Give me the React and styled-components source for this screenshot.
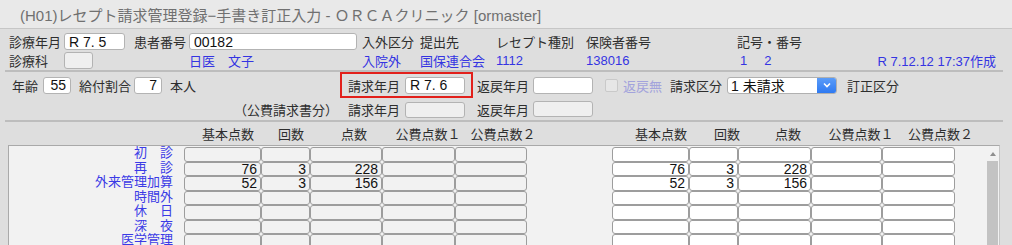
import React from "react";
import styled, { createGlobalStyle } from "styled-components";

const GlobalStyle = createGlobalStyle`
  body {
    margin: 0;
    background: #dedede;
    font-family: "Liberation Sans", "Noto Sans CJK JP", sans-serif;
    overflow: hidden;
  }
`;

const Window = styled.div`
  width: 1012px;
  height: 245px;
  overflow: hidden;
  background: #dedede;
`;

const TitleBar = styled.div`
  height: 28px;
  display: flex;
  align-items: center;
  padding-left: 20px;
  background: #e9e9e9;
  border-bottom: 1px solid #c6c6c6;
  font-size: 15px;
  color: #707070;
  white-space: nowrap;
`;

const Form = styled.div`
  margin: 0 9px 0 5px;
`;

const InfoGrid = styled.div`
  display: grid;
  grid-template-columns: 55px 70px 55px 173px 58px 76px 90px 151px 1fr;
  grid-template-rows: 19px 19px;
  align-items: center;
  padding: 3px 0 0 4px;
`;

const Label = styled.span`
  font-size: 13px;
  color: ${(p) => (p.$muted ? "#a3a3dc" : "#2e2e2e")};
  white-space: nowrap;
  text-align: ${(p) => p.$align || "left"};
`;

const Value = styled.span`
  font-size: 13px;
  color: #3434e2;
  white-space: nowrap;
`;

const Field = styled.input`
  box-sizing: border-box;
  width: ${(p) => p.$w}px;
  height: ${(p) => p.$h || 17}px;
  margin: 0;
  padding: 0 4px;
  border: 1px solid #b3b3b3;
  border-radius: 3px;
  background: ${(p) => (p.disabled ? "#efefef" : "#fff")};
  font-family: "Liberation Sans", "Noto Sans CJK JP", sans-serif;
  font-size: 14px;
  color: #111;
  text-align: ${(p) => p.$align || "left"};
  outline: none;
`;

const Stamp = styled.div`
  display: flex;
  align-items: center;
  gap: 17px;
  padding: 0 7px 0 3px;
`;

const Created = styled(Value)`
  margin-left: auto;
`;

const Divider = styled.div`
  height: 2px;
  background: #bdbdbd;
`;

const ClaimGrid = styled.div`
  display: grid;
  grid-template-columns: 335px 133px 1fr;
  grid-template-rows: 26px 22px;
  align-items: center;
`;

const PersonRow = styled.div`
  display: grid;
  grid-template-columns: 31px 36px 55px 36px auto;
  align-items: center;
  padding-left: 7px;
`;

const PublicNote = styled(Label)`
  padding-right: 2px;
`;

const ClaimBox = styled.div`
  box-sizing: border-box;
  height: 100%;
  display: grid;
  grid-template-columns: 57px 60px;
  align-items: center;
  padding-left: 6px;
  border: 2px solid ${(p) => (p.$marked ? "#e2201b" : "transparent")};
`;

const RestRow = styled.div`
  display: grid;
  grid-template-columns: 56px 72px 18px 47px 57px 120px auto;
  align-items: center;
  padding-left: 4px;
`;

const CheckBox = styled.span`
  box-sizing: border-box;
  width: 13px;
  height: 13px;
  border: 1px solid #c9c9c9;
  border-radius: 2px;
  background: #e6e6e6;
`;

const Select = styled.div`
  box-sizing: border-box;
  width: 110px;
  height: 17px;
  display: flex;
  align-items: center;
  border: 1px solid #b0b0b0;
  border-radius: 3px;
  background: #fff;
  overflow: hidden;
`;

const SelectText = styled.span`
  flex: 1;
  padding-left: 3px;
  font-size: 14px;
  color: #111;
`;

const SelectButton = styled.span`
  width: 19px;
  align-self: stretch;
  display: flex;
  align-items: center;
  justify-content: center;
  background: linear-gradient(#5b9cf8, #2f7af2);
`;

const HeaderGrid = styled.div`
  display: grid;
  grid-template-columns: 64px 62px 64px 84px 66px 94px 62px 70px 52px 94px 58px;
  height: 23px;
  align-items: center;
  padding-left: 191px;
`;

const HeaderCell = styled(Label)`
  text-align: center;
`;

const Panel = styled.div`
  margin-left: 3px;
  width: 992px;
  height: 110px;
  box-sizing: border-box;
  display: flex;
  background: #f2f2f2;
  border-top: 1px solid #a9a9a9;
  border-left: 1px solid #a9a9a9;
  border-right: 1px solid #c6c6c6;
`;

const TableGrid = styled.div`
  display: grid;
  grid-template-columns: 175px 77px 49px 72px 73px 72px 85px 77px 49px 73px 71px 73px;
  grid-auto-rows: 14.5px;
  padding-top: 1px;
`;

const RowLabel = styled.span`
  font-size: 13px;
  line-height: 12px;
  color: #3b3be6;
  text-align: right;
  padding-right: 11px;
  white-space: nowrap;
`;

const Cell = styled.span`
  box-sizing: border-box;
  height: 100%;
  border: 1px solid #9d9d9d;
  border-radius: 3px;
  background: ${(p) => (p.$light ? "#fff" : "#f2f2f2")};
  padding-right: 3px;
  font-size: 14px;
  line-height: 12.5px;
  color: #111;
  text-align: right;
`;

const ScrollTrack = styled.div`
  width: 11px;
  margin-left: auto;
  margin-right: 1px;
  display: flex;
  flex-direction: column;
  align-items: center;
`;

const ScrollArrow = styled.span`
  margin-top: 6px;
  width: 0;
  height: 0;
  border-left: 3px solid transparent;
  border-right: 3px solid transparent;
  border-bottom: 4px solid #8f8f8f;
`;

const ScrollThumb = styled.span`
  margin-top: 5px;
  width: 11px;
  flex: 1;
  background: #c3c3c3;
`;

const rows = [
  { label: "初　診", values: ["", "", ""] },
  { label: "再　診", values: ["76", "3", "228"] },
  { label: "外来管理加算", values: ["52", "3", "156"] },
  { label: "時間外", values: ["", "", ""] },
  { label: "休　日", values: ["", "", ""] },
  { label: "深　夜", values: ["", "", ""] },
  { label: "医学管理", values: ["", "", ""] },
];

const headers = ["基本点数", "回数", "点数", "公費点数１", "公費点数２"];

function CellGroup({ values, light }) {
  return (
    <>
      <Cell $light={light}>{values[0]}</Cell>
      <Cell $light={light}>{values[1]}</Cell>
      <Cell $light={light}>{values[2]}</Cell>
      <Cell $light={light} />
      <Cell $light={light} />
    </>
  );
}

export default function App() {
  return (
    <Window>
      <GlobalStyle />
      <TitleBar>(H01)レセプト請求管理登録−手書き訂正入力 - ＯＲＣＡクリニック [ormaster]</TitleBar>
      <Form>
        <InfoGrid>
          <Label>診療年月</Label>
          <Field $w={61} defaultValue="R 7. 5" readOnly />
          <Label>患者番号</Label>
          <Field $w={168} defaultValue="00182" readOnly />
          <Label>入外区分</Label>
          <Label>提出先</Label>
          <Label>レセプト種別</Label>
          <Label>保険者番号</Label>
          <Label>記号・番号</Label>

          <Label>診療科</Label>
          <Field $w={29} disabled />
          <span />
          <Value>日医　文子</Value>
          <Value>入院外</Value>
          <Value>国保連合会</Value>
          <Value>1112</Value>
          <Value>138016</Value>
          <Stamp>
            <Value>1</Value>
            <Value>2</Value>
            <Created>R 7.12.12 17:37作成</Created>
          </Stamp>
        </InfoGrid>
        <Divider />
        <ClaimGrid>
          <PersonRow>
            <Label>年齢</Label>
            <Field $w={28} $align="right" defaultValue="55" readOnly />
            <Label>給付割合</Label>
            <Field $w={28} $align="right" defaultValue="7" readOnly />
            <Label>本人</Label>
          </PersonRow>
          <ClaimBox $marked>
            <Label>請求年月</Label>
            <Field $w={60} defaultValue="R 7. 6" readOnly />
          </ClaimBox>
          <RestRow>
            <Label>返戻年月</Label>
            <Field $w={60} readOnly />
            <CheckBox />
            <Label $muted>返戻無</Label>
            <Label>請求区分</Label>
            <Select>
              <SelectText>1 未請求</SelectText>
              <SelectButton>
                <svg width="8" height="6" viewBox="0 0 8 6">
                  <path d="M1 1.5 L4 4.5 L7 1.5" fill="none" stroke="#fff" strokeWidth="1.6" />
                </svg>
              </SelectButton>
            </Select>
            <Label>訂正区分</Label>
          </RestRow>

          <PublicNote $align="right">（公費請求書分）</PublicNote>
          <ClaimBox>
            <Label>請求年月</Label>
            <Field $w={60} $h={16} disabled />
          </ClaimBox>
          <RestRow>
            <Label>返戻年月</Label>
            <Field $w={60} $h={16} disabled />
          </RestRow>
        </ClaimGrid>
        <Divider />
        <HeaderGrid>
          {headers.map((h) => (
            <HeaderCell key={"l" + h}>{h}</HeaderCell>
          ))}
          <span />
          {headers.map((h) => (
            <HeaderCell key={"r" + h}>{h}</HeaderCell>
          ))}
        </HeaderGrid>
        <Panel>
          <TableGrid>
            {rows.map((r) => (
              <React.Fragment key={r.label}>
                <RowLabel>{r.label}</RowLabel>
                <CellGroup values={r.values} />
                <span />
                <CellGroup values={r.values} light />
              </React.Fragment>
            ))}
          </TableGrid>
          <ScrollTrack>
            <ScrollArrow />
            <ScrollThumb />
          </ScrollTrack>
        </Panel>
      </Form>
    </Window>
  );
}
